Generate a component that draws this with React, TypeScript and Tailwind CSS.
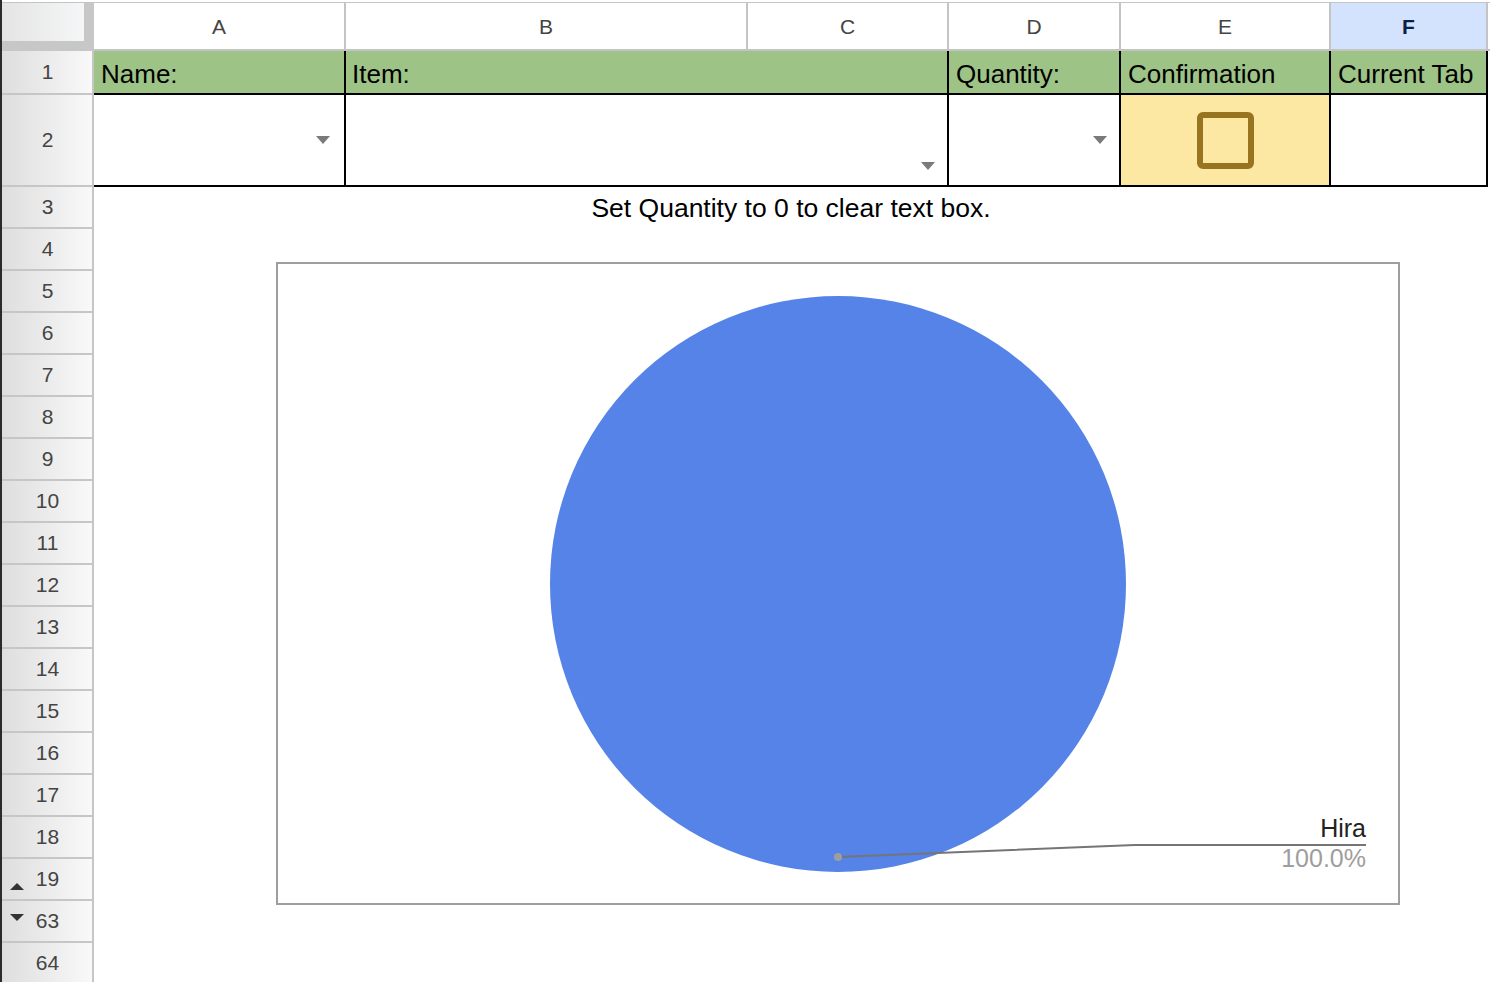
const FONT = { fontFamily: '"Liberation Sans", Arial, sans-serif' };

function RowHead({ n, h, arrow }: { n: string; h: string; arrow?: "up" | "down" }) {
    return (
        <div
            className={`relative w-[92px] shrink-0 ${h} flex items-center justify-center border-r-2 border-b-2 border-[#c6c6c6] bg-linear-to-r from-[#dedede] to-[#f9f9f9] text-[21px] text-[#444]`}
        >
            {arrow === "up" && (
                <span className="absolute left-[8px] top-[24px] w-0 h-0 border-l-[7px] border-r-[7px] border-b-[7px] border-l-transparent border-r-transparent border-b-[#333]" />
            )}
            {arrow === "down" && (
                <span className="absolute left-[8px] top-[13px] w-0 h-0 border-l-[7px] border-r-[7px] border-t-[7px] border-l-transparent border-r-transparent border-t-[#333]" />
            )}
            <span className="pl-[1px]">{n}</span>
        </div>
    );
}

function Caret({ className }: { className: string }) {
    return (
        <span
            className={`absolute w-0 h-0 border-l-[7px] border-r-[7px] border-t-[8px] border-l-transparent border-r-transparent border-t-[#7a7a7a] ${className}`}
        />
    );
}

function Chart() {
    return (
        <div className="absolute left-[274px] top-[262px] w-[1124px] h-[643px] border-2 border-[#9e9e9e] bg-white">
            <svg width="1120" height="639" viewBox="0 0 1120 639">
                <circle cx="560" cy="320" r="288" fill="#5583e8" />
                <polyline points="560,593 857,581 1088,581" fill="none" stroke="#757575" strokeWidth="2" />
                <circle cx="560" cy="593" r="4" fill="#9e9e9e" />
                <text x="1088" y="573" textAnchor="end" fontSize="25" fill="#222" style={FONT}>
                    Hira
                </text>
                <text x="1088" y="603" textAnchor="end" fontSize="25" fill="#9e9e9e" style={FONT}>
                    100.0%
                </text>
            </svg>
        </div>
    );
}

export default function App() {
    const emptyRows = ["4", "5", "6", "7", "8", "9", "10", "11", "12", "13", "14", "15", "16", "17", "18"];
    const head = "shrink-0 bg-[#9ec386] border-r-2 border-b-2 border-black flex items-center pt-[4px] text-[26px] text-black whitespace-nowrap overflow-hidden";
    return (
        <main className="relative w-[1490px] h-[982px] overflow-hidden bg-white border-l-2 border-[#2e2a28] pt-[2px]" style={FONT}>
            {/* column headers */}
            <div className="flex h-[49px] border-t border-[#c4c4c4]">
                <div className="w-[92px] shrink-0 bg-[#c7c7c7]">
                    <div className="w-[82px] h-[38px] bg-linear-to-r from-[#e4e4e4] to-[#f5f6f7]" />
                </div>
                {[
                    ["A", "w-[252px]"],
                    ["B", "w-[402px]"],
                    ["C", "w-[201px]"],
                    ["D", "w-[172px]"],
                    ["E", "w-[210px]"],
                ].map(([l, w]) => (
                    <div key={l} className={`${w} shrink-0 flex items-center justify-center pt-[2px] border-r-2 border-b-2 border-[#c4c4c4] text-[21px] text-[#444]`}>
                        {l}
                    </div>
                ))}
                <div className="w-[157px] shrink-0 flex items-center justify-center pt-[2px] border-r-2 border-b-2 border-[#c4c4c4] bg-[#d3e3fd] text-[21px] font-bold text-[#0b1f4b]">
                    F
                </div>
                <div className="flex-1 border-b-2 border-[#c4c4c4]" />
            </div>

            {/* row 1 */}
            <div className="flex h-[44px]">
                <RowHead n="1" h="h-[44px]" />
                <div className={`w-[252px] pl-[7px] ${head}`}>Name:</div>
                <div className={`w-[603px] pl-[6px] ${head}`}>Item:</div>
                <div className={`w-[172px] pl-[7px] ${head}`}>Quantity:</div>
                <div className={`w-[210px] pl-[7px] ${head}`}>Confirmation</div>
                <div className={`w-[157px] pl-[7px] ${head}`}>Current Tab</div>
            </div>

            {/* row 2 */}
            <div className="flex h-[92px]">
                <RowHead n="2" h="h-[92px]" />
                <div className="relative w-[252px] shrink-0 border-r-2 border-b-2 border-black">
                    <Caret className="right-[14px] top-[41px]" />
                </div>
                <div className="relative w-[603px] shrink-0 border-r-2 border-b-2 border-black">
                    <Caret className="right-[12px] bottom-[15px]" />
                </div>
                <div className="relative w-[172px] shrink-0 border-r-2 border-b-2 border-black">
                    <Caret className="right-[12px] top-[41px]" />
                </div>
                <div className="w-[210px] shrink-0 bg-[#fce7a3] border-r-2 border-b-2 border-black flex items-center justify-center">
                    <div className="w-[57px] h-[57px] border-[6px] border-[#987421] rounded-[6px]" />
                </div>
                <div className="w-[157px] shrink-0 border-r-2 border-b-2 border-black" />
            </div>

            {/* row 3 */}
            <div className="flex h-[42px]">
                <RowHead n="3" h="h-[42px]" />
                <div className="w-[1394px] shrink-0 flex items-center justify-center pt-[1px] text-[26.5px] text-black">
                    Set Quantity to 0 to clear text box.
                </div>
            </div>

            {emptyRows.map((n) => (
                <div key={n} className="flex h-[42px]">
                    <RowHead n={n} h="h-[42px]" />
                </div>
            ))}
            <div className="flex h-[42px]">
                <RowHead n="19" h="h-[42px]" arrow="up" />
            </div>
            <div className="flex h-[42px]">
                <RowHead n="63" h="h-[42px]" arrow="down" />
            </div>
            <div className="flex h-[42px]">
                <RowHead n="64" h="h-[42px]" />
            </div>

            <Chart />
        </main>
    );
}
